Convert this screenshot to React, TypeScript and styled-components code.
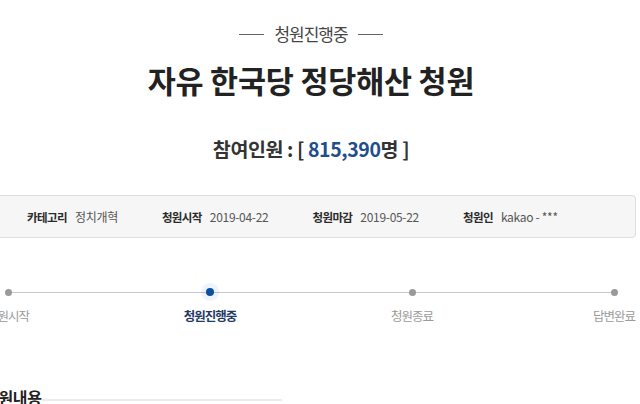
import React from 'react';
import styled, { createGlobalStyle } from 'styled-components';

type stepType = {
  name: string,
  active?: boolean
};

const steps: stepType[] = [
  { name: '청원시작' },
  { name: '청원진행중', active: true },
  { name: '청원종료' },
  { name: '답변완료' }
];

const info = [
  { label: '카테고리', value: '정치개혁' },
  { label: '청원시작', value: '2019-04-22' },
  { label: '청원마감', value: '2019-05-22' },
  { label: '청원인', value: 'kakao - ***' }
];

const App: React.FC = () => {
  return (
    <>
      <GlobalStyle />
      <PetitionView>
        <StatusLabel>청원진행중</StatusLabel>
        <Title>자유 한국당 정당해산 청원</Title>
        <Count>
          참여인원 : [ <CountNumber>815,390</CountNumber>명 ]
        </Count>
        <InfoBox>
          {info.map(item => (
            <InfoItem key={item.label}>
              <InfoLabel>{item.label}</InfoLabel>
              <InfoValue>{item.value}</InfoValue>
            </InfoItem>
          ))}
        </InfoBox>
        <Progress>
          {steps.map(step => (
            <Step key={step.name}>
              <Dot active={step.active} />
              <StepName active={step.active}>{step.name}</StepName>
            </Step>
          ))}
        </Progress>
        <ContentHead>
          <ContentTitle>청원내용</ContentTitle>
          <ContentRule />
        </ContentHead>
      </PetitionView>
    </>
  );
};

const GlobalStyle = createGlobalStyle`
html, body {
  margin: 0;
  padding: 0;
  background: #fff;
  overflow: hidden;
}
body {
  font-family: "Noto Sans CJK KR", "Noto Sans", sans-serif;
  color: #333;
}
`;

const PetitionView = styled.div`
width: 654px;
margin-left: -16px;
padding-top: 24px;
display: flex;
flex-direction: column;
align-items: center;
`;

const StatusLabel = styled.div`
display: flex;
align-items: center;
gap: 10px;
font-size: 17px;
line-height: 20px;
letter-spacing: -1px;
color: #444;
&::before, &::after {
  content: '';
  width: 25px;
  height: 1px;
  background-color: #666;
}
`;

const Title = styled.h1`
margin: 18px 0 0;
font-size: 30.5px;
line-height: 36px;
font-weight: 700;
color: #222;
letter-spacing: -0.2px;
`;

const Count = styled.div`
margin-top: 39px;
font-size: 19.5px;
line-height: 24px;
font-weight: 700;
color: #333;
letter-spacing: -0.4px;
`;

const CountNumber = styled.span`
color: #1f4e8d;
`;

const InfoBox = styled.div`
align-self: stretch;
margin: 34px 2px 0 0;
height: 41px;
padding-left: 42px;
display: flex;
align-items: center;
gap: 44px;
background-color: #f6f6f6;
border: 1px solid #dedede;
border-radius: 4px;
`;

const InfoItem = styled.div`
display: flex;
align-items: center;
gap: 8px;
line-height: 16px;
white-space: nowrap;
`;

const InfoLabel = styled.span`
font-size: 11.5px;
font-weight: 700;
color: #2a2a2a;
letter-spacing: -0.6px;
`;

const InfoValue = styled.span`
font-size: 12px;
color: #555;
letter-spacing: -0.3px;
`;

const Progress = styled.div`
position: relative;
align-self: stretch;
margin-top: 50px;
display: flex;
justify-content: space-between;
&::before {
  content: '';
  position: absolute;
  left: 24px;
  right: 24px;
  top: 3.5px;
  height: 1px;
  background-color: #c8c8c8;
}
`;

const Step = styled.div`
position: relative;
width: 48px;
display: flex;
flex-direction: column;
align-items: center;
gap: 12px;
`;

const Dot = styled.span<{ active?: boolean }>`
width: ${props => props.active ? '8px' : '7px'};
height: ${props => props.active ? '8px' : '7px'};
margin-top: ${props => props.active ? '0' : '0.5px'};
margin-bottom: ${props => props.active ? '0' : '0.5px'};
border-radius: 50%;
background-color: ${props => props.active ? '#0c4ea3' : '#9a9a9a'};
box-shadow: ${props => props.active ? '0 0 0 5px rgba(40, 110, 210, 0.08)' : 'none'};
`;

const StepName = styled.span<{ active?: boolean }>`
font-size: 12.5px;
line-height: 16px;
letter-spacing: -1px;
white-space: nowrap;
font-weight: ${props => props.active ? 700 : 400};
color: ${props => props.active ? '#1f3a66' : '#9a9a9a'};
`;

const ContentHead = styled.div`
align-self: stretch;
margin-top: 63px;
display: flex;
align-items: flex-start;
`;

const ContentTitle = styled.h2`
margin: 0;
font-size: 16px;
line-height: 20px;
font-weight: 700;
color: #222;
letter-spacing: -0.3px;
`;

const ContentRule = styled.div`
width: 240px;
height: 2px;
margin-top: 12px;
background-color: #ebebeb;
`;

export default App;
